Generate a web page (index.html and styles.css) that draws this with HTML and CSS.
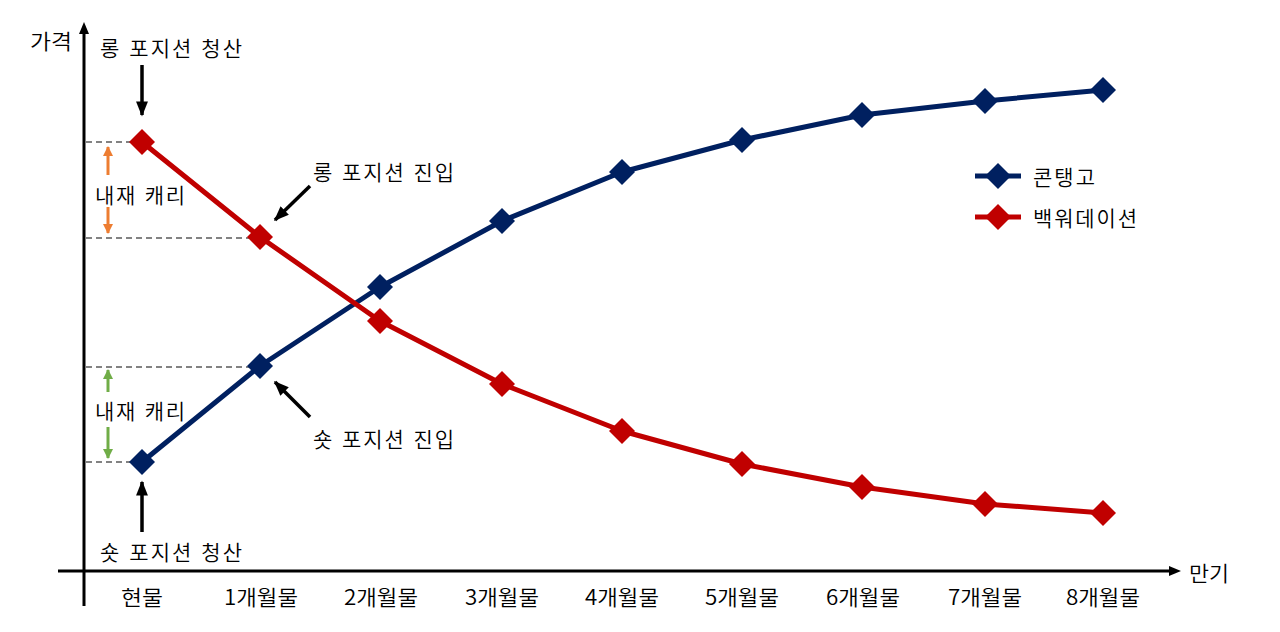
FILE: index.html
```html
<!DOCTYPE html>
<html lang="ko">
<head>
<meta charset="utf-8">
<title>콘탱고와 백워데이션</title>
<link rel="stylesheet" href="styles.css">
</head>
<body>
<div class="chart">
<svg class="plot" width="1280" height="632" viewBox="0 0 1280 632" xmlns="http://www.w3.org/2000/svg">
  <defs>
    <marker id="ah" viewBox="0 0 10 10" refX="9" refY="5" markerWidth="4.3" markerHeight="3.4" orient="auto" markerUnits="strokeWidth" preserveAspectRatio="none">
      <path d="M0 0 L10 5 L0 10 z" fill="#000"/>
    </marker>
    <marker id="ao" viewBox="0 0 10 10" refX="9" refY="5" markerWidth="3.4" markerHeight="3.4" orient="auto" markerUnits="strokeWidth">
      <path d="M0 0 L10 5 L0 10 z" fill="#ED7D31"/>
    </marker>
    <marker id="ag" viewBox="0 0 10 10" refX="9" refY="5" markerWidth="3.4" markerHeight="3.4" orient="auto" markerUnits="strokeWidth">
      <path d="M0 0 L10 5 L0 10 z" fill="#70AD47"/>
    </marker>
  </defs>

  <!-- dashed guides -->
  <g class="dash">
    <line x1="86" y1="142" x2="142" y2="142"/>
    <line x1="86" y1="238" x2="260" y2="238"/>
    <line x1="86" y1="367" x2="260" y2="367"/>
    <line x1="86" y1="462" x2="142" y2="462"/>
  </g>

  <!-- axes -->
  <line class="axis" x1="84" y1="606" x2="84" y2="32"/>
  <path d="M84 22 L79 34 L89 34 z" fill="#000"/>
  <line class="axis" x1="58" y1="571" x2="1170" y2="571"/>
  <path d="M1181 571 L1169 566 L1169 576 z" fill="#000"/>

  <!-- series -->
  <polyline class="blue" points="142,462 260,366 380,287 502,221 622,172 742,140 862,115 985,101 1103,90"/>
  <polyline class="red" points="142,142 260,237 380,321 502,384 622,431 742,464 862,487 985,504 1103,513"/>

  <g class="bm">
    <path d="M142 449 L155 462 L142 475 L129 462 z"/>
    <path d="M260 353 L273 366 L260 379 L247 366 z"/>
    <path d="M380 274 L393 287 L380 300 L367 287 z"/>
    <path d="M502 208 L515 221 L502 234 L489 221 z"/>
    <path d="M622 159 L635 172 L622 185 L609 172 z"/>
    <path d="M742 127 L755 140 L742 153 L729 140 z"/>
    <path d="M862 102 L875 115 L862 128 L849 115 z"/>
    <path d="M985 88 L998 101 L985 114 L972 101 z"/>
    <path d="M1103 77 L1116 90 L1103 103 L1090 90 z"/>
  </g>
  <g class="rm">
    <path d="M142 129 L155 142 L142 155 L129 142 z"/>
    <path d="M260 224 L273 237 L260 250 L247 237 z"/>
    <path d="M380 308 L393 321 L380 334 L367 321 z"/>
    <path d="M502 371 L515 384 L502 397 L489 384 z"/>
    <path d="M622 418 L635 431 L622 444 L609 431 z"/>
    <path d="M742 451 L755 464 L742 477 L729 464 z"/>
    <path d="M862 474 L875 487 L862 500 L849 487 z"/>
    <path d="M985 491 L998 504 L985 517 L972 504 z"/>
    <path d="M1103 500 L1116 513 L1103 526 L1090 513 z"/>
  </g>

  <!-- black annotation arrows -->
  <g class="arr">
    <line x1="142" y1="65" x2="142" y2="115" marker-end="url(#ah)"/>
    <line x1="142" y1="532" x2="142" y2="482" marker-end="url(#ah)"/>
    <line x1="310" y1="186" x2="275" y2="220" marker-end="url(#ah)"/>
    <line x1="310" y1="417" x2="275" y2="382" marker-end="url(#ah)"/>
  </g>

  <!-- carry arrows -->
  <line class="oarr" x1="108" y1="175" x2="108" y2="147" marker-end="url(#ao)"/>
  <line class="oarr" x1="108" y1="207" x2="108" y2="233" marker-end="url(#ao)"/>
  <line class="garr" x1="108" y1="392" x2="108" y2="370" marker-end="url(#ag)"/>
  <line class="garr" x1="108" y1="427" x2="108" y2="458" marker-end="url(#ag)"/>

  <!-- legend -->
  <line class="legb" x1="975" y1="176" x2="1021" y2="176"/>
  <path class="bmk" d="M998 163 L1011 176 L998 189 L985 176 z"/>
  <line class="legr" x1="975" y1="217" x2="1021" y2="217"/>
  <path class="rmk" d="M998 204 L1011 217 L998 230 L985 217 z"/>

  <!-- texts -->
  <g class="lbl">
    <text x="30" y="40" textLength="42" lengthAdjust="spacingAndGlyphs">가격</text>
    <text x="100" y="47" textLength="142" lengthAdjust="spacing">롱 포지션 청산</text>
    <text x="95" y="194" textLength="90" lengthAdjust="spacing">내재 캐리</text>
    <text x="95" y="410" textLength="90" lengthAdjust="spacing">내재 캐리</text>
    <text x="100" y="551" textLength="142" lengthAdjust="spacing">숏 포지션 청산</text>
    <text x="313" y="171" textLength="141" lengthAdjust="spacing">롱 포지션 진입</text>
    <text x="313" y="438" textLength="141" lengthAdjust="spacing">숏 포지션 진입</text>
    <text x="1033" y="176" textLength="62" lengthAdjust="spacing">콘탱고</text>
    <text x="1033" y="217" textLength="104" lengthAdjust="spacing">백워데이션</text>
    <text x="1189" y="572" textLength="40" lengthAdjust="spacingAndGlyphs">만기</text>
  </g>
  <g class="lbl tick">
    <text x="142" y="596" textLength="42" lengthAdjust="spacingAndGlyphs">현물</text>
    <text x="261" y="596" textLength="74" lengthAdjust="spacingAndGlyphs">1개월물</text>
    <text x="381" y="596" textLength="74" lengthAdjust="spacingAndGlyphs">2개월물</text>
    <text x="502" y="596" textLength="74" lengthAdjust="spacingAndGlyphs">3개월물</text>
    <text x="622" y="596" textLength="74" lengthAdjust="spacingAndGlyphs">4개월물</text>
    <text x="742" y="596" textLength="74" lengthAdjust="spacingAndGlyphs">5개월물</text>
    <text x="863" y="596" textLength="74" lengthAdjust="spacingAndGlyphs">6개월물</text>
    <text x="985" y="596" textLength="74" lengthAdjust="spacingAndGlyphs">7개월물</text>
    <text x="1103" y="596" textLength="74" lengthAdjust="spacingAndGlyphs">8개월물</text>
  </g>
</svg>
</div>
</body>
</html>
```

FILE: styles.css
```css
html, body {
  margin: 0;
  padding: 0;
  background: #ffffff;
}

.chart {
  width: 1280px;
  height: 632px;
  overflow: hidden;
}

.plot {
  display: block;
}

.dash line {
  stroke: #595959;
  stroke-width: 1.3;
  stroke-dasharray: 6 4;
}

.axis {
  stroke: #000;
  stroke-width: 3;
}

.blue {
  fill: none;
  stroke: #002060;
  stroke-width: 5;
  stroke-linejoin: round;
}

.red {
  fill: none;
  stroke: #C00000;
  stroke-width: 5;
  stroke-linejoin: round;
}

.bm path, .bmk {
  fill: #002060;
}

.rm path, .rmk {
  fill: #C00000;
}

.arr line {
  stroke: #000;
  stroke-width: 3.5;
}

.oarr {
  stroke: #ED7D31;
  stroke-width: 3;
}

.garr {
  stroke: #70AD47;
  stroke-width: 3;
}

.legb {
  stroke: #002060;
  stroke-width: 5;
}

.legr {
  stroke: #C00000;
  stroke-width: 5;
}

.lbl text {
  font-family: "Noto Sans CJK KR", "Noto Sans", sans-serif;
  font-size: 21px;
  font-weight: 350;
  fill: #000;
  dominant-baseline: central;
}

.tick text {
  text-anchor: middle;
}
```
